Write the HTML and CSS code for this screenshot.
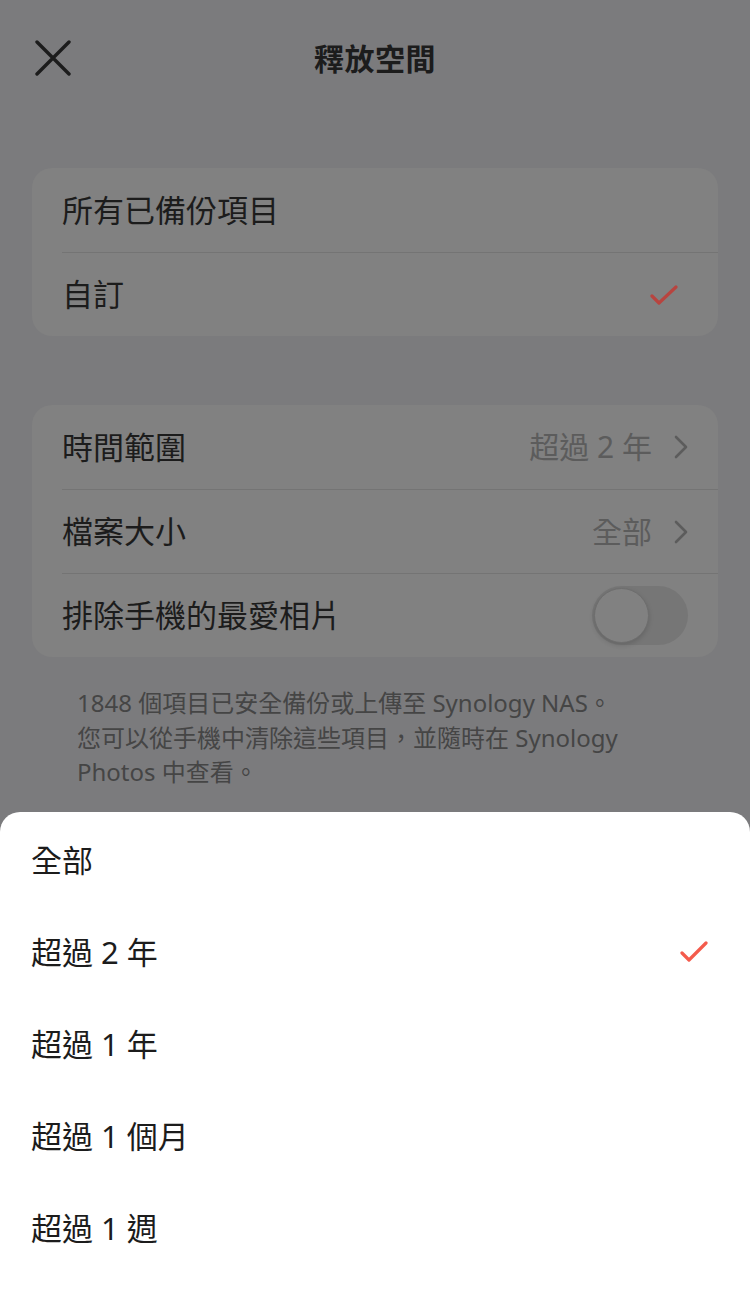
FILE: index.html
```html
<!DOCTYPE html>
<html lang="zh-Hant">
<head>
    <meta charset="UTF-8">
    <meta name="viewport" content="width=device-width, initial-scale=1.0">
    <title>釋放空間</title>
    <link rel="stylesheet" href="styles.css">
</head>
<body>
    <div class="page">
        <header class="topbar">
            <button class="close" aria-label="關閉">
                <svg width="36" height="36" viewBox="0 0 36 36">
                    <path d="M2 2 L34 34 M34 2 L2 34" stroke="#1c1c1c" stroke-width="3.4" stroke-linecap="round" fill="none"/>
                </svg>
            </button>
            <h1 class="title">釋放空間</h1>
        </header>

        <div class="card">
            <div class="row">
                <span class="label">所有已備份項目</span>
            </div>
            <div class="row">
                <span class="label">自訂</span>
                <svg class="check dim" width="28" height="20" viewBox="0 0 28 20">
                    <path d="M2 11 L9 18 L26 2" stroke="#b8443f" stroke-width="3.2" stroke-linecap="round" stroke-linejoin="round" fill="none"/>
                </svg>
            </div>
        </div>

        <div class="card">
            <div class="row">
                <span class="label">時間範圍</span>
                <span class="value">超過 2 年
                    <svg class="chevron" width="14" height="24" viewBox="0 0 14 24">
                        <path d="M2 2 L12 12 L2 22" stroke="#5c5c5c" stroke-width="2.6" stroke-linecap="round" stroke-linejoin="round" fill="none"/>
                    </svg>
                </span>
            </div>
            <div class="row">
                <span class="label">檔案大小</span>
                <span class="value">全部
                    <svg class="chevron" width="14" height="24" viewBox="0 0 14 24">
                        <path d="M2 2 L12 12 L2 22" stroke="#5c5c5c" stroke-width="2.6" stroke-linecap="round" stroke-linejoin="round" fill="none"/>
                    </svg>
                </span>
            </div>
            <div class="row">
                <span class="label">排除手機的最愛相片</span>
                <span class="toggle"><span class="knob"></span></span>
            </div>
        </div>

        <p class="note">1848 個項目已安全備份或上傳至 Synology NAS。<br>您可以從手機中清除這些項目，並隨時在 Synology Photos 中查看。</p>
    </div>

    <div class="sheet">
        <div class="option">全部</div>
        <div class="option">超過 2 年
            <svg class="check" width="28" height="22" viewBox="0 0 28 22">
                <path d="M2 12 L9 19 L26 2" stroke="#f45b4c" stroke-width="3.2" stroke-linecap="round" stroke-linejoin="round" fill="none"/>
            </svg>
        </div>
        <div class="option">超過 1 年</div>
        <div class="option">超過 1 個月</div>
        <div class="option">超過 1 週</div>
    </div>
</body>
</html>
```

FILE: styles.css
```css
body {
    margin: 0;
    height: 1300px;
    display: flex;
    flex-direction: column;
    background: #7b7b7d;
    font-family: "Noto Sans", "Noto Sans CJK TC", sans-serif;
    color: #1c1c1c;
    overflow: hidden;
}

.page {
    flex: 1;
}

.topbar {
    height: 120px;
    padding-bottom: 6px;
    box-sizing: border-box;
    display: flex;
    align-items: center;
    justify-content: center;
    position: relative;
}

.close {
    position: absolute;
    left: 35px;
    top: 40px;
    background: none;
    border: none;
    padding: 0;
    width: 36px;
    height: 36px;
}

.title {
    margin: 0;
    font-size: 30px;
    font-weight: 700;
    letter-spacing: 0.5px;
}

.card {
    margin: 48px 32px 0;
    background: #818181;
    border-radius: 20px;
}

.card + .card {
    margin-top: 69px;
}

.row {
    height: 84px;
    margin-left: 30px;
    padding-right: 30px;
    padding-bottom: 4px;
    display: flex;
    align-items: center;
    justify-content: space-between;
    border-top: 1px solid #747474;
    box-sizing: border-box;
}

.row:first-child {
    border-top: none;
}

.label {
    font-size: 31px;
}

.value {
    display: flex;
    align-items: center;
    gap: 22px;
    font-size: 30px;
    color: #5c5c5c;
}

.chevron {
    margin-top: 4px;
}

.check.dim {
    margin: 4px 10px 0 0;
}

.toggle {
    width: 96px;
    height: 59px;
    margin-top: 4px;
    border-radius: 30px;
    background: #767676;
    display: flex;
    align-items: center;
    padding: 2px;
    box-sizing: border-box;
}

.knob {
    width: 55px;
    height: 55px;
    border-radius: 50%;
    background: #818181;
    border: 1px solid #6e6e6e;
    box-sizing: border-box;
    box-shadow: 0 2px 5px rgba(0, 0, 0, 0.15);
}

.note {
    margin: 29px 62px 0 77px;
    font-size: 24px;
    line-height: 34.5px;
    color: #454545;
}

.sheet {
    height: 488px;
    background: #ffffff;
    border-radius: 20px 20px 0 0;
    padding-top: 2px;
    box-sizing: border-box;
}

.option {
    height: 92px;
    padding: 0 42px 4px 31px;
    box-sizing: border-box;
    display: flex;
    align-items: center;
    justify-content: space-between;
    font-size: 31px;
    color: #1c1c1c;
}

.option .check {
    margin-top: 4px;
}
```
